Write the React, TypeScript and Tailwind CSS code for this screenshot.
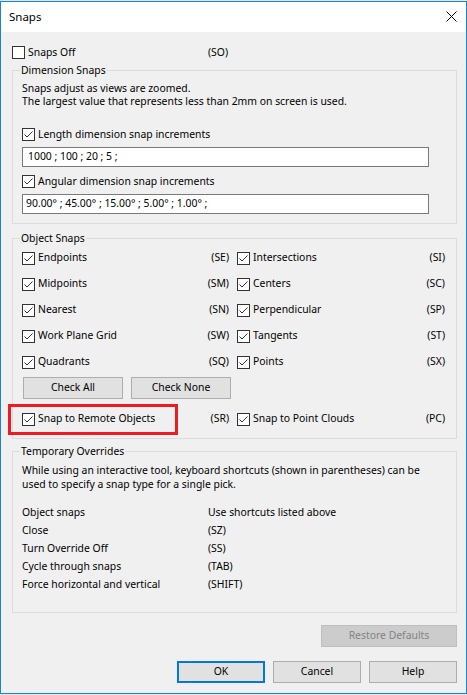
import type { ReactNode } from 'react'

type Snap = { label: string; key: string }

const leftSnaps: Snap[] = [
  { label: 'Endpoints', key: '(SE)' },
  { label: 'Midpoints', key: '(SM)' },
  { label: 'Nearest', key: '(SN)' },
  { label: 'Work Plane Grid', key: '(SW)' },
  { label: 'Quadrants', key: '(SQ)' },
]

const rightSnaps: Snap[] = [
  { label: 'Intersections', key: '(SI)' },
  { label: 'Centers', key: '(SC)' },
  { label: 'Perpendicular', key: '(SP)' },
  { label: 'Tangents', key: '(ST)' },
  { label: 'Points', key: '(SX)' },
]

const overrides = [
  ['Object snaps', 'Use shortcuts listed above'],
  ['Close', '(SZ)'],
  ['Turn Override Off', '(SS)'],
  ['Cycle through snaps', '(TAB)'],
  ['Force horizontal and vertical', '(SHIFT)'],
]

function Checkbox({ checked }: { checked?: boolean }) {
  return (
    <span className="flex h-[13px] w-[13px] shrink-0 items-center justify-center border border-[#333333] bg-white">
      {checked && (
        <svg width="11" height="11" viewBox="0 0 11 11" fill="none">
          <path d="M1.5 5.5 L4 8 L9.5 2.5" stroke="#333333" strokeWidth="1" />
        </svg>
      )}
    </span>
  )
}

function CheckRow({ label, keyText, checked = true }: { label: string; keyText?: string; checked?: boolean }) {
  return (
    <div className="flex h-[26px] items-center">
      <Checkbox checked={checked} />
      <span className="ml-[3px] flex-1 whitespace-nowrap">{label}</span>
      {keyText && <span className="pr-px">{keyText}</span>}
    </div>
  )
}

function Group({ title, className, children }: { title: string; className?: string; children: ReactNode }) {
  return (
    <fieldset className={`border border-[#dcdcdc] pl-[9px] pr-[9px] ${className ?? ''}`}>
      <legend className="-ml-[2px] px-px leading-[14px]">{title}</legend>
      {children}
    </fieldset>
  )
}

function Button({ children, className }: { children: ReactNode; className?: string }) {
  return (
    <button className={`flex h-[22px] items-center justify-center border border-[#adadad] bg-[#e1e1e1] ${className ?? ''}`}>
      {children}
    </button>
  )
}

export default function App() {
  return (
    <div className="h-[695px] w-[467px] bg-[#e6e6e6] pt-px font-['Noto_Sans',sans-serif] text-[10.4px] text-black">
      <div className="flex h-[693px] w-[467px] flex-col border border-[#1883d7] bg-[#f0f0f0]">
        {/* title bar */}
        <div className="flex h-[30px] items-center justify-between bg-white pl-[8px] pr-[9px]">
          <span className="pb-px text-[11.5px]">Snaps</span>
          <svg width="11" height="11" viewBox="0 0 11 11" className="mb-[2px]">
            <path d="M0.5 0.5 L10.5 10.5 M10.5 0.5 L0.5 10.5" stroke="#000" strokeWidth="1" />
          </svg>
        </div>

        <div className="flex flex-col pl-[11px] pr-[9px]">
          <div className="mt-[14px] flex h-[13px] items-center">
            <Checkbox />
            <span className="ml-[3px] w-[180px]">Snaps Off</span>
            <span>(SO)</span>
          </div>

          <Group title="Dimension Snaps" className="mt-[4px] pb-[9px]">
            <p className="mt-[5px] leading-[13px]">Snaps adjust as views are zoomed.</p>
            <p className="leading-[13px]">The largest value that represents less than 2mm on screen is used.</p>

            <div className="mt-[20px] flex h-[13px] items-center">
              <Checkbox checked />
              <span className="ml-[3px]">Length dimension snap increments</span>
            </div>
            <div className="mt-[6px] flex h-[20px] w-[407px] items-center border border-[#7a7a7a] bg-white pl-[5px]">
              1000 ; 100 ; 20 ; 5 ;
            </div>

            <div className="mt-[8px] flex h-[13px] items-center">
              <Checkbox checked />
              <span className="ml-[3px]">Angular dimension snap increments</span>
            </div>
            <div className="mt-[6px] flex h-[20px] w-[407px] items-center border border-[#7a7a7a] bg-white pl-[3px]">
              90.00° ; 45.00° ; 15.00° ; 5.00° ; 1.00° ;
            </div>
          </Group>

          <Group title="Object Snaps" className="mt-[7px] pb-[6px]">
            <div className="grid grid-cols-[208px_209px] gap-x-[7px]">
              <div className="flex flex-col">
                {leftSnaps.map((s) => (
                  <CheckRow key={s.key} label={s.label} keyText={s.key} />
                ))}
              </div>
              <div className="flex flex-col">
                {rightSnaps.map((s) => (
                  <CheckRow key={s.key} label={s.label} keyText={s.key} />
                ))}
              </div>
            </div>

            <div className="mt-[2px] flex gap-[8px] pl-px">
              <Button className="w-[100px]">Check All</Button>
              <Button className="w-[100px]">Check None</Button>
            </div>

            <div className="mt-[7px] grid grid-cols-[208px_209px] gap-x-[7px]">
              <div className="relative">
                <CheckRow label="Snap to Remote Objects" keyText="(SR)" />
                <div className="pointer-events-none absolute left-[-14px] top-[-2px] h-[31px] w-[170px] border-[3px] border-[#ed1c24]" />
              </div>
              <CheckRow label="Snap to Point Clouds" keyText="(PC)" />
            </div>
          </Group>

          <Group title="Temporary Overrides" className="mt-[5px] pb-[18px]">
            <p className="mt-[5px] leading-[14px]">
              While using an interactive tool, keyboard shortcuts (shown in parentheses) can be
              <br />
              used to specify a snap type for a single pick.
            </p>
            <div className="mt-[13px] flex flex-col">
              {overrides.map(([name, key]) => (
                <div key={name} className="flex h-[18px] items-center">
                  <span className="w-[186px]">{name}</span>
                  <span>{key}</span>
                </div>
              ))}
            </div>
          </Group>

          <div className="mt-[12px] flex justify-end">
            <button className="flex h-[22px] w-[136px] items-center justify-center border border-[#bfbfbf] bg-[#cccccc] text-[#838383]">
              Restore Defaults
            </button>
          </div>

          <div className="mt-[14px] flex justify-end gap-[8px]">
            <button className="flex h-[22px] w-[88px] items-center justify-center border-2 border-[#0078d7] bg-[#e1e1e1]">
              OK
            </button>
            <Button className="w-[88px]">Cancel</Button>
            <Button className="w-[88px]">Help</Button>
          </div>
        </div>
      </div>
    </div>
  )
}
